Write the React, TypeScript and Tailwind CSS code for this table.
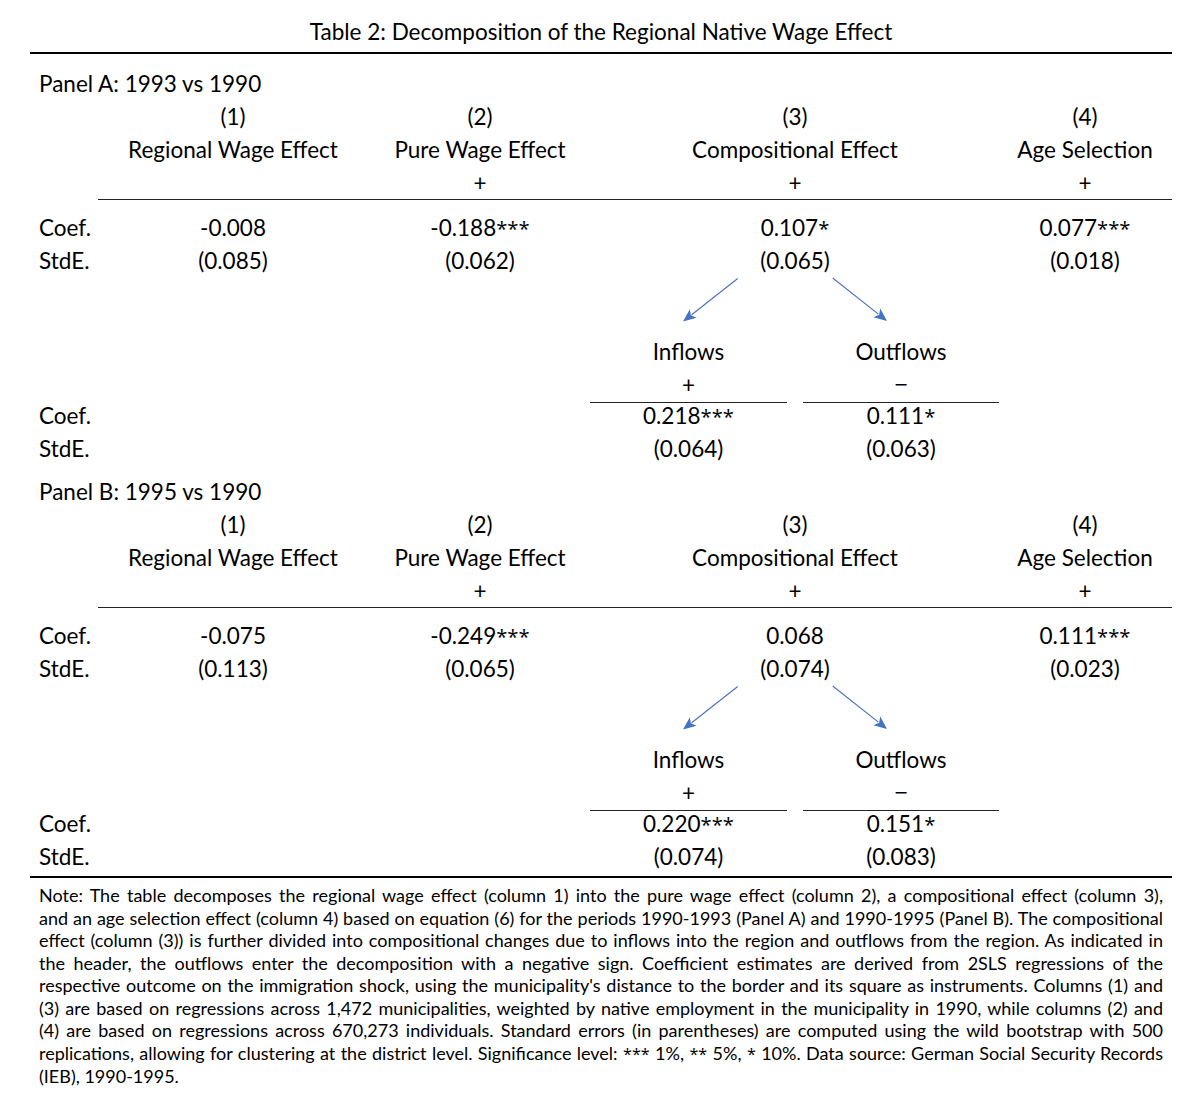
import React from "react";

type Sub = { label: string; sign: string; coef: string; se: string };
type PanelData = {
  title: string;
  heads: string[];
  signs: string[];
  coefs: string[];
  ses: string[];
  sub: Sub[];
};

const panels: PanelData[] = [
  {
    title: "Panel A: 1993 vs 1990",
    heads: ["Regional Wage Effect", "Pure Wage Effect", "Compositional Effect", "Age Selection"],
    signs: ["", "+", "+", "+"],
    coefs: ["-0.008", "-0.188***", "0.107*", "0.077***"],
    ses: ["(0.085)", "(0.062)", "(0.065)", "(0.018)"],
    sub: [
      { label: "Inflows", sign: "+", coef: "0.218***", se: "(0.064)" },
      { label: "Outflows", sign: "\u2212", coef: "0.111*", se: "(0.063)" },
    ],
  },
  {
    title: "Panel B: 1995 vs 1990",
    heads: ["Regional Wage Effect", "Pure Wage Effect", "Compositional Effect", "Age Selection"],
    signs: ["", "+", "+", "+"],
    coefs: ["-0.075", "-0.249***", "0.068", "0.111***"],
    ses: ["(0.113)", "(0.065)", "(0.074)", "(0.023)"],
    sub: [
      { label: "Inflows", sign: "+", coef: "0.220***", se: "(0.074)" },
      { label: "Outflows", sign: "\u2212", coef: "0.151*", se: "(0.083)" },
    ],
  },
];

const noteLines = [
  "Note: The table decomposes the regional wage effect (column 1) into the pure wage effect (column 2), a compositional effect (column 3),",
  "and an age selection effect (column 4) based on equation (6) for the periods 1990-1993 (Panel A) and 1990-1995 (Panel B). The compositional",
  "effect (column (3)) is further divided into compositional changes due to inflows into the region and outflows from the region. As indicated in",
  "the header, the outflows enter the decomposition with a negative sign. Coefficient estimates are derived from 2SLS regressions of the",
  "respective outcome on the immigration shock, using the municipality's distance to the border and its square as instruments. Columns (1) and",
  "(3) are based on regressions across 1,472 municipalities, weighted by native employment in the municipality in 1990, while columns (2) and",
  "(4) are based on regressions across 670,273 individuals. Standard errors (in parentheses) are computed using the wild bootstrap with 500",
  "replications, allowing for clustering at the district level. Significance level: *** 1%, ** 5%, * 10%. Data source: German Social Security Records",
];

// Lato's asterisks and minus are tiny, so those get a wider face
const Val = ({ v }: { v: string }) => (
  <>
    {v.split(/(\*+|\u2212)/).map((part, i) =>
      part.startsWith("*") ? (
        <span key={i} className="[font-family:'Open_Sans',sans-serif] text-[0.9em]">
          {part}
        </span>
      ) : part === "\u2212" ? (
        <span key={i} className="[font-family:'Liberation_Sans',sans-serif]">
          {part}
        </span>
      ) : (
        <span key={i}>{part}</span>
      )
    )}
  </>
);

const Row = ({ label, cells }: { label?: string; cells: string[] }) => (
  <div className="grid grid-cols-[68px_270px_224px_406px_174px] h-[33px] items-center">
    <div className="pl-[9px]">{label}</div>
    {cells.map((c, i) => (
      <div key={i} className="text-center whitespace-nowrap">
        <Val v={c} />
      </div>
    ))}
  </div>
);

const SubRow = ({ label, cells, ruled }: { label?: string; cells: string[]; ruled?: boolean }) => (
  <div className={`grid grid-cols-[68px_492px_197px_16px_196px_1fr] ${ruled ? "h-[31px]" : "h-[33px]"}`}>
    <div className="pl-[9px] flex items-center">{label}</div>
    <div />
    <div className={`flex items-center justify-center ${ruled ? "border-b border-[#222]" : ""}`}>
      <Val v={cells[0]} />
    </div>
    <div />
    <div className={`flex items-center justify-center ${ruled ? "border-b border-[#222]" : ""}`}>
      <Val v={cells[1]} />
    </div>
    <div />
  </div>
);

// arrow from (x1,y1) to tip (x2,y2) with a filled head
const Arrow = ({ x1, y1, x2, y2 }: { x1: number; y1: number; x2: number; y2: number }) => {
  const dx = x2 - x1;
  const dy = y2 - y1;
  const len = Math.hypot(dx, dy);
  const ux = dx / len;
  const uy = dy / len;
  const bx = x2 - ux * 13;
  const by = y2 - uy * 13;
  const px = -uy * 5.5;
  const py = ux * 5.5;
  return (
    <g>
      <line x1={x1} y1={y1} x2={bx + ux * 2} y2={by + uy * 2} stroke="#4a6fbf" strokeWidth={1.1} />
      <polygon
        points={`${x2},${y2} ${bx + px},${by + py} ${bx + ux * 3},${by + uy * 3} ${bx - px},${by - py}`}
        fill="#4472c4"
      />
    </g>
  );
};

const Panel = ({ p, first }: { p: PanelData; first?: boolean }) => (
  <div className={first ? "mt-[13px]" : "mt-[10px]"}>
    <div className="h-[33px] flex items-center pl-[9px]">{p.title}</div>
    <Row cells={["(1)", "(2)", "(3)", "(4)"]} />
    <Row cells={p.heads} />
    <div className="ml-[68px] border-b border-[#222]">
      <div className="grid grid-cols-[270px_224px_406px_174px] h-[33px] items-center">
        {p.signs.map((s, i) => (
          <div key={i} className="text-center">
            {s}
          </div>
        ))}
      </div>
    </div>
    <div className="pt-[11px]">
      <Row label="Coef." cells={p.coefs} />
      <Row label="StdE." cells={p.ses} />
    </div>
    <svg width={1142} height={58} className="block">
      <Arrow x1={707.7} y1={1.5} x2={653} y2={44.5} />
      <Arrow x1={802.7} y1={1} x2={857} y2={44} />
    </svg>
    <SubRow cells={p.sub.map((s) => s.label)} />
    <SubRow cells={p.sub.map((s) => s.sign)} ruled />
    <SubRow label="Coef." cells={p.sub.map((s) => s.coef)} />
    <SubRow label="StdE." cells={p.sub.map((s) => s.se)} />
  </div>
);

export default function App() {
  return (
    <div className="w-[1200px] h-[1119px] bg-white text-black [font-family:Lato,'Noto_Sans',sans-serif]">
      <div className="ml-[30px] w-[1142px] pt-[15px]">
        <div className="h-[33px] flex items-center justify-center text-[22.5px]">
          Table 2: Decomposition of the Regional Native Wage Effect
        </div>
        <div className="mt-[4px] border-t-2 border-black" />
        <div className="text-[22.5px]">
          {panels.map((p, i) => (
            <Panel key={i} p={p} first={i === 0} />
          ))}
        </div>
        <div className="mt-[3px] border-t-2 border-black" />
        <div className="px-[9px] pt-[6px] text-[18px] leading-[22.5px]">
          {noteLines.map((l, i) => (
            <div key={i} className="text-justify [text-align-last:justify]">
              <Val v={l} />
            </div>
          ))}
          <div>(IEB), 1990-1995.</div>
        </div>
      </div>
    </div>
  );
}
